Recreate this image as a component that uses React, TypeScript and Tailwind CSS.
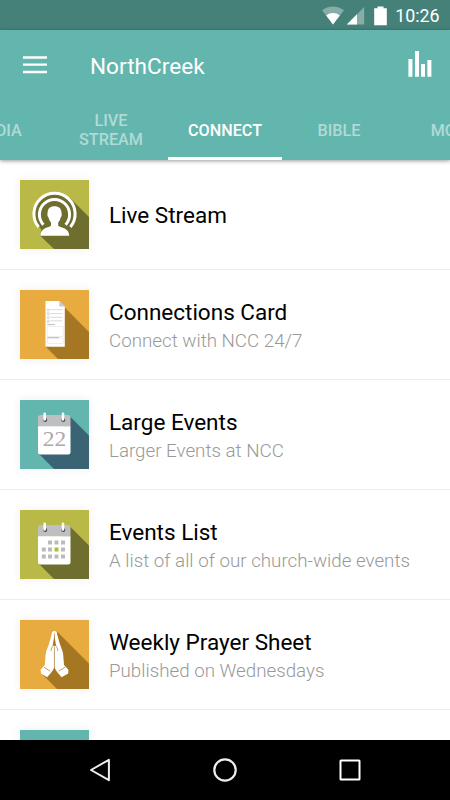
import type { ReactNode } from "react";

type Item = {
    title: string;
    subtitle?: string;
    icon: ReactNode;
};

function Tile({ color, children }: { color: string; children?: ReactNode }) {
    return (
        <svg viewBox="0 0 69 69" className="block h-[69px] w-[69px] shrink-0 shadow-[0_0_10px_rgba(0,0,0,0.07)]">
            <rect width="69" height="69" fill={color} />
            {children}
        </svg>
    );
}

function StreamIcon() {
    return (
        <Tile color="#b9b947">
            <path d="M50 18L69 37V69H34L20 55.5L22 46Z" fill="#6e6e2e" />
            <circle cx="34.5" cy="34" r="20" fill="#6e6e2e" />
            <g fill="none" stroke="#fff" strokeWidth="3">
                <path d="M18.6 47A20.6 20.6 0 1 1 50.4 47" />
                <path d="M23.4 44.8A15.1 15.1 0 1 1 45.6 44.8" />
            </g>
            <path
                d="M34.5 26.2C30.2 26.2 27.4 28.8 27.6 33.2C27.1 34 27.4 36.4 28.5 37.5C29 39.8 30 41.4 31 42.5V45.5C29.5 48 20.3 47.2 20.3 55.8H49.2C49.2 47.2 39.5 48 38.2 45.5V42.5C39.3 41.4 40.1 39.8 40.7 37.5C41.8 36.4 42.1 34 41.5 33.2C41.7 28.8 38.9 26.2 34.5 26.2Z"
                fill="#fff"
            />
        </Tile>
    );
}

function CardIcon() {
    return (
        <Tile color="#e8ab3f">
            <path d="M44.7 17.5L69 42V69H38L25.5 56.5Z" fill="#a67723" />
            <path d="M25.5 11H39.3L44.8 16.5V56.7H25.5Z" fill="#fff" />
            <path d="M39.3 11V16.5H44.8Z" fill="#c9c9c9" />
            <g fill="none" stroke="#ccc" strokeWidth="0.7">
                <path d="M27.2 19h2v2h-2zM27.2 22.8h2v2h-2zM27.2 26.6h2v2h-2zM27.2 30.4h2v2h-2z" />
                <path d="M30.5 19.7H42.5M30.5 23.5H42.5M30.5 27.3H42.5M30.5 30.8H42.5" />
                <path d="M27.2 36.5H43.3V46.5H27.2ZM27.2 48H43.3V53.5H27.2Z" stroke="#e6e6e6" />
            </g>
            <path d="M27.2 34.6H35M27.2 47.7H39" stroke="#aaa" strokeWidth="0.8" />
        </Tile>
    );
}

function CalendarBase() {
    return (
        <>
            <path d="M20.5 15H48a2.5 2.5 0 0 1 2.5 2.5V26.5H18V17.5A2.5 2.5 0 0 1 20.5 15Z" fill="#bfbfc1" />
            <path d="M18 26.2H50.5V52a2.5 2.5 0 0 1-2.5 2.5H20.5A2.5 2.5 0 0 1 18 52Z" fill="#fff" />
            <circle cx="25.2" cy="20" r="2" fill="#444c4c" />
            <circle cx="43.3" cy="20" r="2" fill="#444c4c" />
            <path d="M24.7 13.8V19.5M43 13.8V19.5" stroke="#fff" strokeWidth="2.6" strokeLinecap="round" />
        </>
    );
}

function EventIcon() {
    return (
        <Tile color="#63b6ae">
            <path d="M50 16.5L69 35.5V69H34L18.8 53.8Z" fill="#3a6474" />
            <CalendarBase />
            <text
                x="34.4"
                y="46"
                textAnchor="middle"
                textLength="23.5"
                lengthAdjust="spacingAndGlyphs"
                fill="#a9a9ab"
                className="font-['Liberation_Serif',serif] text-[20.5px]"
            >
                22
            </text>
        </Tile>
    );
}

function EventListIcon() {
    return (
        <Tile color="#b9b947">
            <path d="M50 16.5L69 35.5V69H34L18.8 53.8Z" fill="#6e6e2e" />
            <CalendarBase />
            <path
                d="M28 30.5h4v4h-4zM34.5 30.5h4v4h-4zM41 30.5h4v4h-4zM21.8 37.5h4v4h-4zM28 37.5h4v4h-4zM41 37.5h4v4h-4zM21.8 44.5h4v4h-4zM28 44.5h4v4h-4zM34.5 44.5h4v4h-4zM41 44.5h4v4h-4z"
                fill="#bbb"
            />
            <path d="M34.5 37.5h4v4h-4z" fill="#b5bb35" />
        </Tile>
    );
}

function PrayerIcon() {
    return (
        <Tile color="#e8ab3f">
            <path d="M37.5 12L69 43.5V69H37L22.5 54.5Z" fill="#a67723" />
            <path
                d="M34.4 11C32.4 11 31.9 12.2 31.6 14.5L28.8 24.5C27 29 25.6 32 25.5 36L24.8 45L20.6 49.8L21 53.5L27.3 57.2C28.6 55.5 30.5 53.5 32 51.5C33.6 49.5 34 48 34.4 46C34.8 48 35.2 49.5 36.8 51.5C38.3 53.5 40.2 55.5 41.5 57.2L48.2 53.5L48.4 49.8L44 45L43.3 36C43.2 32 41.8 29 40 24.5L37.2 14.5C36.9 12.2 36.4 11 34.4 11Z"
                fill="#fff"
            />
            <path
                d="M34.4 13.5V24M34.4 27V47M33.5 25C32 27 31.2 28 31 31M35.3 25C36.8 27 37.6 28 37.8 31M23.8 47.2L30.2 51.2M45 47.2L38.6 51.2"
                fill="none"
                stroke="#a67723"
                strokeWidth="0.7"
            />
            <path d="M34.4 16L32.8 25L34.4 26.5L36 25Z" fill="#a67723" />
        </Tile>
    );
}

const items: Item[] = [
    { title: "Live Stream", icon: <StreamIcon /> },
    { title: "Connections Card", subtitle: "Connect with NCC 24/7", icon: <CardIcon /> },
    { title: "Large Events", subtitle: "Larger Events at NCC", icon: <EventIcon /> },
    { title: "Events List", subtitle: "A list of all of our church-wide events", icon: <EventListIcon /> },
    { title: "Weekly Prayer Sheet", subtitle: "Published on Wednesdays", icon: <PrayerIcon /> },
    { title: "", icon: <Tile color="#63b6ae" /> },
];

const tabs = ["MEDIA", "LIVE STREAM", "CONNECT", "BIBLE", "MORE"];

function StatusBar() {
    return (
        <div className="flex h-[30px] shrink-0 items-center justify-end bg-[#458179] pr-[10.5px] text-white">
            <svg viewBox="0 0 66 20" className="mt-px h-5 w-[66px]">
                <path d="M0 4.3A17.5 17.5 0 0 1 22 4.3L11 18.5Z" fill="#fff" opacity="0.35" />
                <path d="M4.2 9.4A11 11 0 0 1 17.8 9.4L11 18.5Z" fill="#fff" />
                <path d="M42.2 1V18.5H24.8Z" fill="#fff" opacity="0.35" />
                <path d="M35 8.2V18.5H24.8Z" fill="#fff" />
                <path d="M55.5 0.5H61.5V2.3H64.8V19.3H52.2V2.3H55.5Z" fill="#fff" />
            </svg>
            <span className="ml-[7px] mt-[2px] text-[17.8px] leading-5">10:26</span>
        </div>
    );
}

export default function App() {
    return (
        <div className="flex h-[800px] w-[450px] flex-col overflow-hidden bg-white font-['Roboto',sans-serif]">
            <StatusBar />
            <header className="z-10 flex h-[130px] shrink-0 flex-col bg-[#63b6ae] text-white shadow-[0_1px_4px_rgba(0,0,0,0.4)]">
                <div className="flex h-[70px] items-center pl-[23px] pr-[18px]">
                    <svg viewBox="0 0 24 18" className="h-[18px] w-6">
                        <path d="M0 1.5H24M0 8.7H24M0 16H24" stroke="#fff" strokeWidth="2.3" />
                    </svg>
                    <h1 className="ml-[43px] mt-[3px] text-[22.6px] leading-7">NorthCreek</h1>
                    <svg viewBox="0 0 24 26" className="ml-auto h-[26px] w-6 -mt-[3px]">
                        <path d="M0.4 8h4v17.7h-4zM7 0h4v25.7h-4zM13 13h4v12.7h-4zM19.4 9h4v16.7h-4z" fill="#fff" />
                    </svg>
                </div>
                {/* Scrolling tabs, centred on the selected one */}
                <nav className="-ml-[60px] flex h-[60px] w-[570px]">
                    {tabs.map((tab) => (
                        <div
                            key={tab}
                            className={
                                tab === "CONNECT"
                                    ? "flex w-[114px] items-center justify-center border-b-[3px] border-white pt-[3px] text-center text-[16.2px] font-medium leading-[19px]"
                                    : "flex w-[114px] items-center justify-center px-5 text-center text-[16.2px] font-medium leading-[19px] text-white/50"
                            }
                        >
                            {tab}
                        </div>
                    ))}
                </nav>
            </header>
            <main className="flex-1 overflow-hidden">
                {items.map((item, i) => (
                    <div key={i} className="flex h-[110px] items-center border-b border-[#ececec] pl-5">
                        {item.icon}
                        <div className="ml-[20px]">
                            <div className="text-[22.5px] leading-[30px] text-black">{item.title}</div>
                            {item.subtitle && (
                                <div className="-mb-px mt-[2px] text-[18.75px] font-light leading-[24px] text-[#999]">{item.subtitle}</div>
                            )}
                        </div>
                    </div>
                ))}
            </main>
            <footer className="flex h-[60px] shrink-0 items-center justify-between bg-black pl-[88px] pr-[88px]">
                <svg viewBox="0 0 24 24" className="h-6 w-6" fill="none" stroke="#eee" strokeWidth="2">
                    <path d="M20.9 1.8V22.2L3 12Z" strokeLinejoin="round" />
                </svg>
                <svg viewBox="0 0 24 24" className="h-6 w-6" fill="none" stroke="#eee" strokeWidth="2.2">
                    <circle cx="12" cy="12" r="10.7" />
                </svg>
                <svg viewBox="0 0 24 24" className="h-6 w-6" fill="none" stroke="#fff" strokeWidth="2">
                    <rect x="2.5" y="2.5" width="19" height="19" rx="0.5" />
                </svg>
            </footer>
        </div>
    );
}
